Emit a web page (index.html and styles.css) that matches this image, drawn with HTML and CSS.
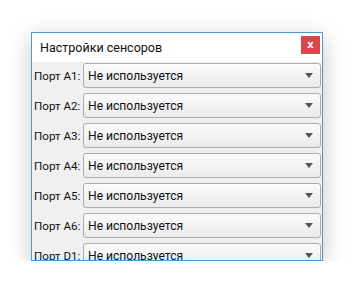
FILE: index.html
```html
<!DOCTYPE html>
<html lang="ru">
<head>
  <meta charset="UTF-8">
  <meta name="viewport" content="width=device-width, initial-scale=1.0">
  <title>Настройки сенсоров</title>
  <link rel="stylesheet" href="styles.css">
</head>
<body>
  <div class="window">
    <div class="titlebar">
      <span class="title">Настройки сенсоров</span>
      <button class="close">x</button>
    </div>
    <div class="content">
      <div class="row"><label>Порт A1:</label><div class="combo"><span>Не используется</span><i class="arrow"></i></div></div>
      <div class="row"><label>Порт A2:</label><div class="combo"><span>Не используется</span><i class="arrow"></i></div></div>
      <div class="row"><label>Порт A3:</label><div class="combo"><span>Не используется</span><i class="arrow"></i></div></div>
      <div class="row"><label>Порт A4:</label><div class="combo"><span>Не используется</span><i class="arrow"></i></div></div>
      <div class="row"><label>Порт A5:</label><div class="combo"><span>Не используется</span><i class="arrow"></i></div></div>
      <div class="row"><label>Порт A6:</label><div class="combo"><span>Не используется</span><i class="arrow"></i></div></div>
      <div class="row"><label>Порт D1:</label><div class="combo"><span>Не используется</span><i class="arrow"></i></div></div>
    </div>
  </div>
</body>
</html>
```

FILE: styles.css
```css
body {
  margin: 0;
  padding: 32px 0 0 31px;
  background-color: #ffffff;
  font-family: Roboto, "Noto Sans", sans-serif;
  color: #111;
}
.window {
  width: 290px;
  height: 227px;
  border: 1px solid #4a9bd4;
  background-color: #f0f0f0;
  box-shadow: 0 6px 22px rgba(0, 0, 0, 0.22);
  overflow: hidden;
}
.titlebar {
  height: 29px;
  background-color: #ffffff;
  display: flex;
  align-items: flex-start;
  justify-content: space-between;
}
.title {
  font-size: 12.5px;
  line-height: 30px;
  padding-left: 8px;
}
.close {
  margin: 3px 2px 0 0;
  width: 19px;
  height: 18px;
  padding: 0;
  border: none;
  background-color: #d9464c;
  color: #fff;
  font-family: "DejaVu Sans", sans-serif;
  font-size: 10px;
  font-weight: bold;
  line-height: 16px;
}
.content {
  padding: 1px 1px 0 2px;
  display: flex;
  flex-direction: column;
  gap: 6px;
}
.row {
  display: flex;
  align-items: center;
  height: 24px;
}
label {
  width: 49px;
  font-size: 11.6px;
  padding-top: 1px;
  white-space: nowrap;
}
.combo {
  flex: 1;
  height: 22px;
  border: 1px solid #acacac;
  border-radius: 3px;
  background: linear-gradient(#fbfbfb, #ebebeb);
  display: flex;
  align-items: center;
  justify-content: space-between;
  padding: 1px 7px 0 4px;
  font-size: 12.1px;
}
.arrow {
  width: 0;
  height: 0;
  border-left: 4px solid transparent;
  border-right: 4px solid transparent;
  border-top: 5px solid #555;
}
```
